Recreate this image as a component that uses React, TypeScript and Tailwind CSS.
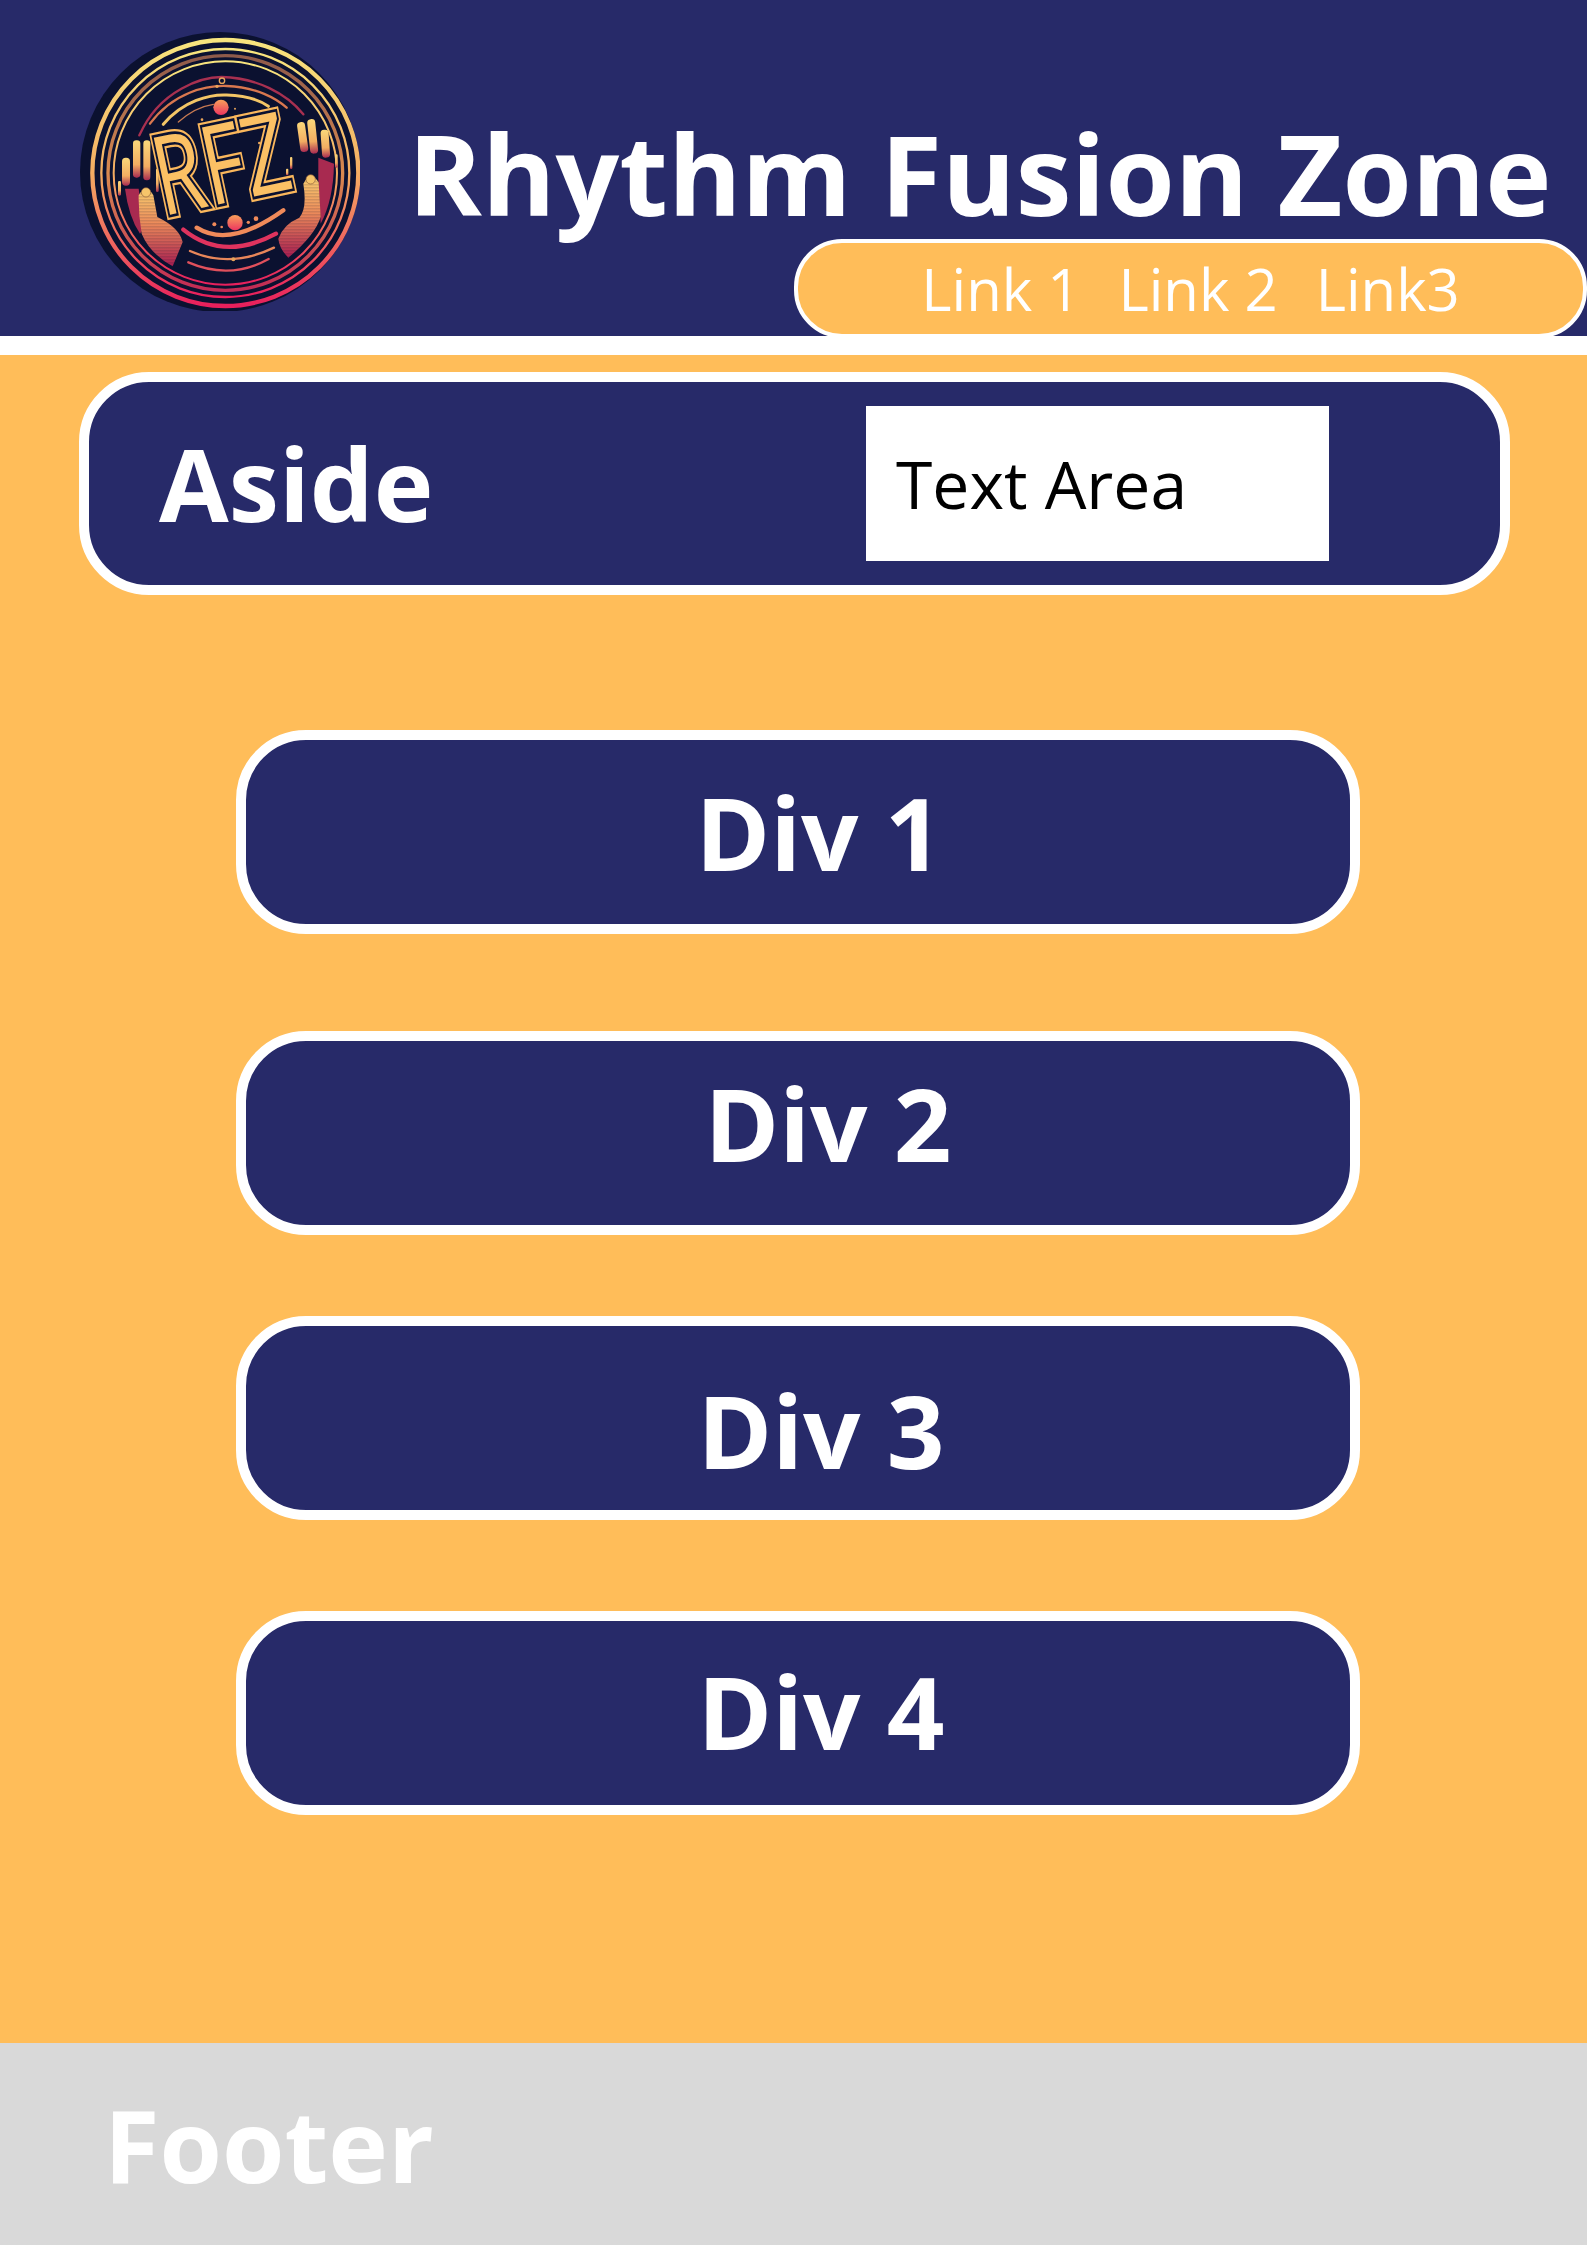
import React from 'react';

const font = { fontFamily: '"Open Sans", "Noto Sans", sans-serif' };

// Rings sit a little right of the dark disc, as in the picture
const rings = [
    { r: 399, w: 13, c: 'url(#rim)' },
    { r: 372, w: 7, c: 'url(#rim)' },
    { r: 352, w: 10, c: 'url(#rimDark)' },
    { r: 335, w: 6, c: 'url(#rim)' },
];

const Logo: React.FC = () => (
    <svg viewBox="30 32 840 840" className="w-[280px] h-[280px] shrink-0">
        <defs>
            <linearGradient id="rim" x1="0" y1="0" x2="0" y2="1">
                <stop offset="0" stopColor="#f8e57e" />
                <stop offset="0.5" stopColor="#f4ad62" />
                <stop offset="0.8" stopColor="#ee5a5e" />
                <stop offset="1" stopColor="#e81f5c" />
            </linearGradient>
            <linearGradient id="rimDark" x1="0" y1="0" x2="0" y2="1">
                <stop offset="0" stopColor="#8f5a4a" />
                <stop offset="0.5" stopColor="#d9894f" />
                <stop offset="1" stopColor="#c22a55" />
            </linearGradient>
            <linearGradient id="hand" x1="0" y1="0" x2="0" y2="1">
                <stop offset="0" stopColor="#f9d070" />
                <stop offset="0.45" stopColor="#ec8a5a" />
                <stop offset="1" stopColor="#a81d50" />
            </linearGradient>
            <linearGradient id="finger" x1="0" y1="0" x2="0" y2="1">
                <stop offset="0" stopColor="#fbd87a" />
                <stop offset="0.65" stopColor="#f2ad62" />
                <stop offset="1" stopColor="#a82a50" />
            </linearGradient>
            <linearGradient id="ball" x1="0" y1="0" x2="0" y2="1">
                <stop offset="0" stopColor="#f8a05a" />
                <stop offset="1" stopColor="#ec3560" />
            </linearGradient>
            <pattern id="lines" width="10" height="9" patternUnits="userSpaceOnUse">
                <rect y="6" width="10" height="2" fill="#0c1230" opacity="0.3" />
            </pattern>
            <text id="rfz" x="478" y="0" textAnchor="middle" fontSize="330" fontWeight="400" letterSpacing="2" style={font}>
                RFZ
            </text>
        </defs>

        <circle cx="450" cy="455" r="420" fill="#0b1130" />
        <circle cx="466" cy="458" r="405" fill="#0b1130" />
        {rings.map((ring) => (
            <circle key={ring.r} cx="466" cy="458" r={ring.r} fill="none" stroke={ring.c} strokeWidth={ring.w} />
        ))}

        {/* arcs above the letters */}
        <g fill="none" strokeLinecap="round">
            <path d="M208 345 C270 205 400 170 455 170 C560 172 650 220 700 282" stroke="#a83050" strokeWidth="7" />
            <path d="M240 310 C310 215 410 195 470 197 C560 200 620 235 650 262" stroke="#d9774f" strokeWidth="7" />
            <path d="M280 312 C340 240 420 222 470 224 C530 226 570 240 595 258" stroke="#f3c566" strokeWidth="9" />
            <path d="M325 305 C370 265 410 255 430 252" stroke="#c77a52" strokeWidth="4" />
        </g>
        <circle cx="453" cy="261" r="23" fill="url(#ball)" />
        <circle cx="456" cy="181" r="8" fill="none" stroke="#e8a45a" strokeWidth="4" />
        <circle cx="441" cy="198" r="5" fill="#e8a45a" />
        <circle cx="396" cy="298" r="4" fill="#e8a45a" />
        <circle cx="495" cy="265" r="3" fill="#e8a45a" />
        <circle cx="568" cy="368" r="4" fill="#e8a45a" />

        {/* arcs below the letters */}
        <g fill="none" strokeLinecap="round">
            <path d="M380 622 Q480 685 640 570" stroke="#f08a5a" strokeWidth="13" />
            <path d="M340 628 Q460 725 618 640" stroke="#e0335e" strokeWidth="13" />
            <path d="M360 692 Q480 745 612 682" stroke="#e8865a" strokeWidth="7" />
            <path d="M355 726 Q480 780 596 716" stroke="#e0505c" strokeWidth="7" />
        </g>
        <circle cx="495" cy="607" r="23" fill="url(#ball)" />
        <circle cx="490" cy="717" r="6" fill="#e8a45a" />
        <circle cx="433" cy="612" r="6" fill="#f08a5a" />
        <circle cx="455" cy="620" r="4" fill="#f08a5a" />
        <circle cx="535" cy="606" r="5" fill="#f08a5a" />
        <circle cx="558" cy="595" r="7" fill="#f08a5a" />

        {/* left hand */}
        <g fill="url(#finger)">
            <rect x="156" y="412" width="24" height="84" rx="11" />
            <rect x="189" y="360" width="22" height="112" rx="10" />
            <rect x="220" y="360" width="21" height="120" rx="10" />
            <rect x="144" y="482" width="9" height="44" rx="4" />
            <rect x="258" y="445" width="8" height="70" rx="4" />
        </g>
        <path d="M165 505 L206 505 L222 620 L210 640 Q176 590 165 505Z" fill="#a82a50" />
        <path d="M206 525 Q228 485 250 525 L262 590 Q328 622 338 665 L308 738 Q240 700 215 640 Q205 580 206 525Z" fill="url(#hand)" />
        <path d="M206 525 Q228 485 250 525 L262 590 Q328 622 338 665 L308 738 Q240 700 215 640 Q205 580 206 525Z" fill="url(#lines)" />
        <circle cx="228" cy="516" r="14" fill="#f6c56a" stroke="#8a5a3a" strokeWidth="2" />

        {/* right hand */}
        <g fill="url(#finger)">
            <rect x="686" y="305" width="24" height="90" rx="11" transform="rotate(-8 698 350)" />
            <rect x="716" y="296" width="24" height="104" rx="11" transform="rotate(-6 728 348)" />
            <rect x="754" y="328" width="24" height="84" rx="11" transform="rotate(-4 766 370)" />
            <rect x="795" y="402" width="8" height="40" rx="4" />
            <rect x="660" y="410" width="7" height="36" rx="3" />
            <rect x="648" y="445" width="7" height="20" rx="3" />
        </g>
        <path d="M745 412 L792 430 Q790 540 752 610 L745 480Z" fill="#a82a50" />
        <path d="M700 490 Q722 448 746 486 L752 590 Q735 645 655 712 Q628 685 625 655 Q640 612 688 592 Q712 565 700 490Z" fill="url(#hand)" />
        <path d="M700 490 Q722 448 746 486 L752 590 Q735 645 655 712 Q628 685 625 655 Q640 612 688 592 Q712 565 700 490Z" fill="url(#lines)" />
        <circle cx="722" cy="477" r="14" fill="#f6c56a" stroke="#8a5a3a" strokeWidth="2" />

        {/* lettering: one text, stroked three times for the inline stripes */}
        <g transform="translate(478 545) rotate(-12) scale(0.72 1) translate(-478 0)" strokeLinejoin="miter">
            <use href="#rfz" fill="#0b1130" stroke="#fab75c" strokeWidth="30" />
            <use href="#rfz" fill="#0b1130" stroke="#0b1130" strokeWidth="16" />
            <use href="#rfz" fill="#fbc064" stroke="none" />
        </g>
    </svg>
);

const DivCard: React.FC<{ label: string; className: string; textClassName: string }> = ({ label, className, textClassName }) => (
    <div className={`h-[204px] rounded-[70px] border-[10px] border-white bg-[#272a69] flex items-center justify-center ${className}`}>
        <span className={`text-[101px] leading-none font-bold text-white ${textClassName}`}>{label}</span>
    </div>
);

export default function App() {
    return (
        <div className="w-[1587px] h-[2245px] flex flex-col overflow-hidden" style={font}>
            <header className="h-[355px] shrink-0 border-b-[19px] border-white bg-[#272a69] flex flex-col">
                <div className="flex items-start pl-[80px] pt-[31px]">
                    <Logo />
                    <h1 className="ml-[48px] mt-[86px] text-[112px] leading-none font-bold text-white whitespace-nowrap">Rhythm Fusion Zone</h1>
                </div>
                <nav className="mt-[-72px] self-end mb-[-3px] w-[793px] h-[99px] rounded-[48px] border-[4px] border-white bg-[#ffbd59] flex items-center justify-center gap-[38px] text-[58px] leading-none font-normal text-white relative">
                    <span>Link 1</span>
                    <span>Link 2</span>
                    <span>Link3</span>
                </nav>
            </header>

            <main className="flex-1 bg-[#ffbd59] flex flex-col">
                <aside className="mt-[17px] ml-[79px] w-[1431px] h-[223px] rounded-[70px] border-[10px] border-white bg-[#272a69] flex items-center">
                    <span className="ml-[70px] w-[350px] shrink-0 text-[101px] leading-none font-bold text-white">Aside</span>
                    <div className="ml-[357px] w-[463px] h-[155px] bg-white flex items-center pl-[30px]">
                        <span className="mb-[2px] text-[66px] leading-none text-black">Text Area</span>
                    </div>
                </aside>
                <div className="ml-[236px] w-[1124px] flex flex-col">
                    <DivCard label="Div 1" className="mt-[135px]" textClassName="ml-[42px]" />
                    <DivCard label="Div 2" className="mt-[97px]" textClassName="ml-[60px] mb-[20px]" />
                    <DivCard label="Div 3" className="mt-[81px]" textClassName="ml-[46px] mt-[24px]" />
                    <DivCard label="Div 4" className="mt-[91px]" textClassName="ml-[46px] mb-[4px]" />
                </div>
            </main>

            <footer className="h-[202px] shrink-0 bg-[#d9d9d9] flex items-center pl-[104px]">
                <span className="text-[101px] leading-none font-bold text-white">Footer</span>
            </footer>
        </div>
    );
}
